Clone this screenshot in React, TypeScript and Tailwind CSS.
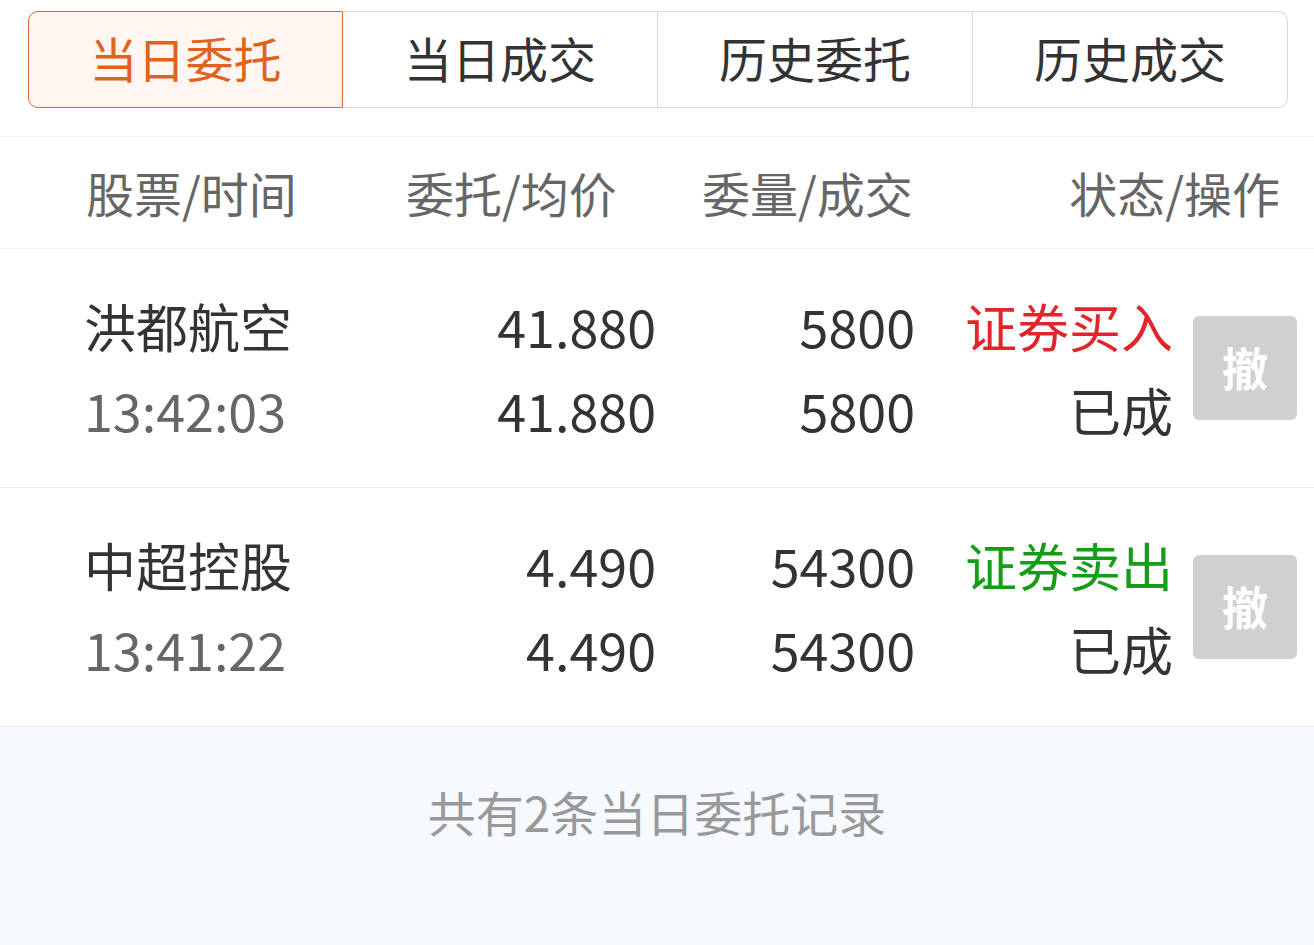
import React from "react";

const tabs = ["当日委托", "当日成交", "历史委托", "历史成交"];

type Order = {
  name: string;
  time: string;
  price: string;
  avg: string;
  qty: string;
  deal: string;
  side: string;
  buy: boolean;
  status: string;
};

const orders: Order[] = [
  { name: "洪都航空", time: "13:42:03", price: "41.880", avg: "41.880", qty: "5800", deal: "5800", side: "证券买入", buy: true, status: "已成" },
  { name: "中超控股", time: "13:41:22", price: "4.490", avg: "4.490", qty: "54300", deal: "54300", side: "证券卖出", buy: false, status: "已成" }
];

const font = "font-['Noto_Sans_CJK_SC','Noto_Sans',sans-serif]";

export default function App() {
  return (
    <div className={`flex min-h-[945px] w-[1314px] flex-col bg-white ${font}`}>
      <div className="ml-[28px] mr-[26px] mt-[11px] flex h-[97px]">
        {tabs.map((tab, i) =>
          i === 0 ? (
            <div
              key={tab}
              className="flex w-[315px] items-center justify-center rounded-l-[10px] border border-[#d8692b] bg-[#fff6f2] pb-[6px] text-[48px] text-[#e0621d]"
            >
              {tab}
            </div>
          ) : (
            <div
              key={tab}
              className="flex flex-1 items-center justify-center border-y border-r border-[#d9d9d9] pb-[6px] text-[48px] text-[#333333] last:rounded-r-[10px]"
            >
              {tab}
            </div>
          )
        )}
      </div>

      <div className="mt-[28px] flex h-[113px] items-center border-t border-b border-[#f0f0f0] pb-[2px] pl-[86px] pr-[34px] text-[48px] text-[#666666]">
        <div className="w-[320px]">股票/时间</div>
        <div className="w-[296px]">委托/均价</div>
        <div className="w-[300px]">委量/成交</div>
        <div className="flex-1 text-right">状态/操作</div>
      </div>

      {orders.map((o) => (
        <div key={o.name} className="flex h-[239px] items-center border-b border-[#eeeeee] pl-[84px] pr-[17px] text-[52px] leading-[84px] text-[#333333]">
          <div className="w-[316px]">
            <div>{o.name}</div>
            <div className="text-[#666666]">{o.time}</div>
          </div>
          <div className="w-[256px] text-right">
            <div>{o.price}</div>
            <div>{o.avg}</div>
          </div>
          <div className="w-[259px] text-right">
            <div>{o.qty}</div>
            <div>{o.deal}</div>
          </div>
          <div className="w-[258px] text-right">
            <div className={o.buy ? "text-[#e0262a]" : "text-[#149d16]"}>{o.side}</div>
            <div>{o.status}</div>
          </div>
          <div className="ml-[20px] flex h-[104px] w-[104px] items-center justify-center rounded-[6px] bg-[#d0d0d0] pb-[4px] text-[46px] font-bold text-white">
            撤
          </div>
        </div>
      ))}

      <div className="flex-1 bg-[#f6f9fe] pt-[56px] text-center text-[48px] leading-[56px] text-[#999999]">
        共有2条当日委托记录
      </div>
    </div>
  );
}
